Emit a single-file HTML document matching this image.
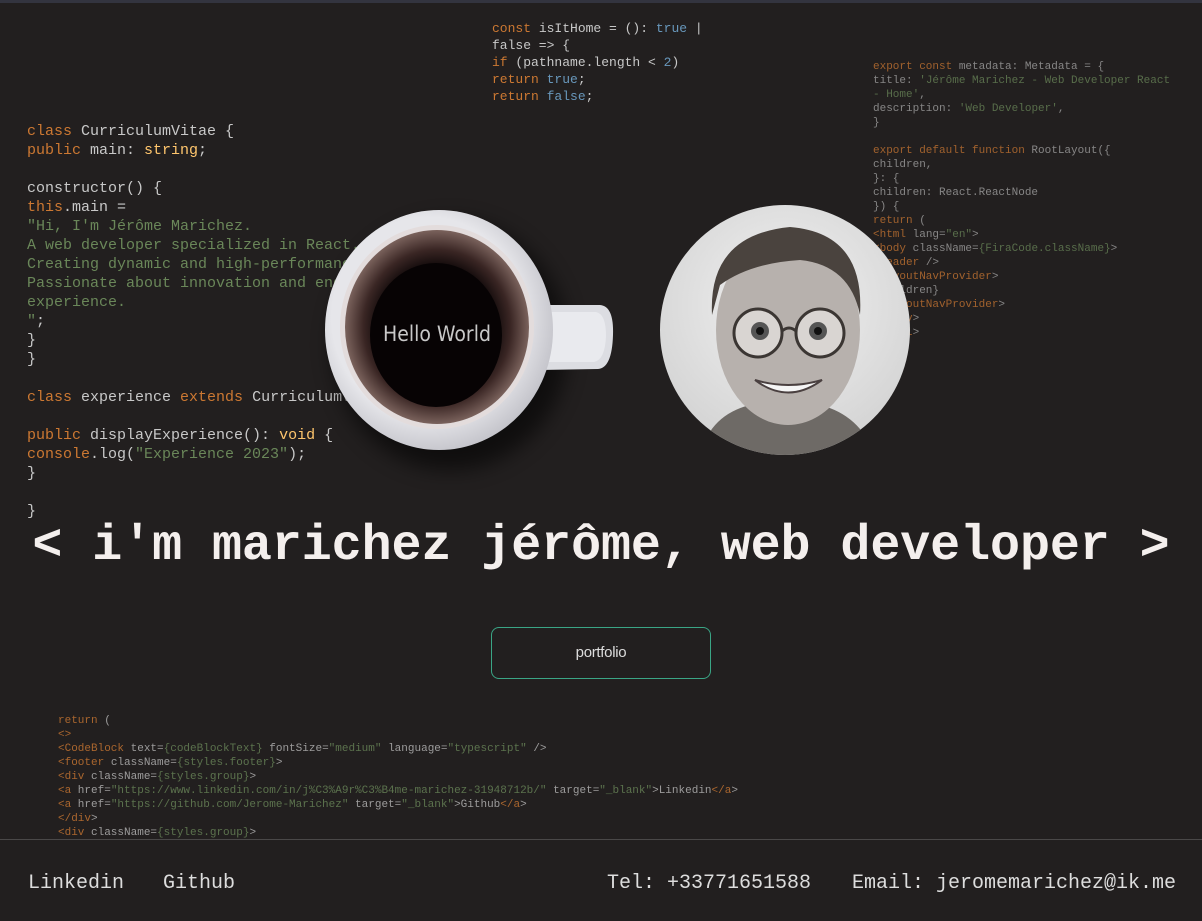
<!DOCTYPE html>
<html><head><meta charset="utf-8"><style>
*{margin:0;padding:0;box-sizing:border-box}
body{width:1202px;height:921px;background:#221f1f;overflow:hidden;position:relative;font-family:"Liberation Mono",monospace;color:#c9c9c9}
.topbar{position:absolute;left:0;top:0;width:1202px;height:3px;background:#33343f}
pre{font-family:"Liberation Mono",monospace;position:absolute;white-space:pre}
.k{color:#cc7832}.s{color:#6a8759}.y{color:#ffc66d}.n{color:#6897bb}
#c1{left:27px;top:122px;font-size:15px;line-height:19px;color:#c8c8c8}
#c2{left:492px;top:20px;font-size:13px;line-height:17px;color:#c8c8c8}
#c3{left:873px;top:60px;font-size:11px;line-height:14px;color:#a8a8a8;opacity:.75}
#c4{left:58px;top:714px;font-size:11px;line-height:14px;color:#bbb;opacity:.8;height:125px;overflow:hidden}
h1{position:absolute;left:0;width:1202px;top:518px;text-align:center;font-family:"Liberation Mono",monospace;font-weight:bold;font-size:50px;color:#f4efed;letter-spacing:-0.08px;white-space:nowrap}
.btn{position:absolute;left:491px;top:627px;width:220px;height:52px;border:1px solid #3aa585;border-radius:8px;color:#ddd;font-family:"Liberation Sans",sans-serif;font-size:15px;text-align:center;line-height:50px;letter-spacing:-.3px}
.foot{position:absolute;left:0;top:839px;width:1202px;height:82px;border-top:1px solid #4a4848;background:#221f1f;font-size:20px;color:#ddd}
.foot span{position:absolute;top:32px}
</style></head><body>
<div class="topbar"></div>
<pre id="c2"><span class="k">const</span> isItHome = (): <span class="n">true</span> |
false =&gt; {
<span class="k">if</span> (pathname.length &lt; <span class="n">2</span>)
<span class="k">return</span> <span class="n">true</span>;
<span class="k">return</span> <span class="n">false</span>;</pre>
<pre id="c3"><span class="k">export const</span> metadata: Metadata = {
title: <span class="s">'Jérôme Marichez - Web Developer React
- Home'</span>,
description: <span class="s">'Web Developer'</span>,
}

<span class="k">export default function</span> RootLayout({
children,
}: {
children: React.ReactNode
}) {
<span class="k">return</span> (
<span class="k">&lt;html</span> lang=<span class="s">"en"</span>&gt;
<span class="k">&lt;body</span> className=<span class="s">{FiraCode.className}</span>&gt;
<span class="k">&lt;Header</span> /&gt;
<span class="k">&lt;LayoutNavProvider</span>&gt;
{children}
<span class="k">&lt;/LayoutNavProvider</span>&gt;
<span class="k">&lt;/body</span>&gt;
<span class="k">&lt;/html</span>&gt;</pre>
<pre id="c1"><span class="k">class</span> CurriculumVitae {
<span class="k">public</span> main: <span class="y">string</span>;

constructor() {
<span class="k">this</span>.main =
<span class="s">"Hi, I'm Jérôme Marichez.
A web developer specialized in React.
Creating dynamic and high-performance
Passionate about innovation and end-user
experience.
"</span>;
}
}

<span class="k">class</span> experience <span class="k">extends</span> CurriculumVitae {

<span class="k">public</span> displayExperience(): <span class="y">void</span> {
<span class="k">console</span>.log(<span class="s">"Experience 2023"</span>);
}

}</pre>
<svg style="position:absolute;left:300px;top:190px" width="340" height="300" viewBox="300 190 340 300">
<defs>
<radialGradient id="cup" cx="0.45" cy="0.45" r="0.6"><stop offset="0.7" stop-color="#e6e6ea"/><stop offset="1" stop-color="#bdbdc4"/></radialGradient>
<radialGradient id="foam" cx="0.5" cy="0.5" r="0.5"><stop offset="0.6" stop-color="#0a0506"/><stop offset="0.8" stop-color="#3a2624"/><stop offset="1" stop-color="#7a625c"/></radialGradient>
<filter id="sh"><feGaussianBlur stdDeviation="10"/></filter>
</defs>
<ellipse cx="450" cy="345" rx="118" ry="125" fill="#000" opacity=".55" filter="url(#sh)"/>
<path d="M540 305 L600 305 Q614 306 613 335 Q612 368 598 369 L540 370 Z" fill="#dcdde2"/>
<path d="M545 312 L596 312 Q606 314 606 336 Q605 360 594 362 L545 362 Z" fill="#e9eaee"/>
<ellipse cx="439" cy="330" rx="114" ry="120" fill="url(#cup)"/>
<ellipse cx="437" cy="327" rx="97" ry="102" fill="#e3dcdc"/>
<ellipse cx="437" cy="327" rx="92" ry="97" fill="url(#foam)"/>
<ellipse cx="436" cy="335" rx="66" ry="72" fill="#070304"/>
<text x="437" y="341" text-anchor="middle" font-family="DejaVu Sans Condensed, Liberation Sans, sans-serif" font-size="21" fill="#c8c8c8">Hello World</text>
</svg>
<svg style="position:absolute;left:660px;top:205px" width="250" height="250" viewBox="0 0 250 250">
<defs><clipPath id="cc"><circle cx="125" cy="125" r="125"/></clipPath>
<radialGradient id="bg" cx="0.5" cy="0.4" r="0.7"><stop offset="0" stop-color="#f2f2f2"/><stop offset="1" stop-color="#cfcfcf"/></radialGradient></defs>
<g clip-path="url(#cc)">
<rect width="250" height="250" fill="url(#bg)"/>
<path d="M40 250 Q50 210 90 200 L160 200 Q200 210 215 250Z" fill="#6e6a66"/>
<ellipse cx="128" cy="125" rx="72" ry="95" fill="#b7b1ad"/>
<path d="M52 110 Q48 30 130 22 Q205 28 200 110 Q190 60 140 55 Q90 58 60 80Z" fill="#4a433e"/>
<circle cx="98" cy="128" r="24" fill="#d9d5d2" stroke="#3b3633" stroke-width="3"/>
<circle cx="160" cy="128" r="24" fill="#d9d5d2" stroke="#3b3633" stroke-width="3"/>
<circle cx="100" cy="126" r="9" fill="#555"/><circle cx="158" cy="126" r="9" fill="#555"/>
<circle cx="100" cy="126" r="4" fill="#111"/><circle cx="158" cy="126" r="4" fill="#111"/>
<path d="M122 126 Q129 120 136 126" stroke="#3b3633" stroke-width="3" fill="none"/>
<path d="M95 175 Q128 200 162 175 Q128 185 95 175Z" fill="#f5f5f5" stroke="#4a4040" stroke-width="2"/>
</g></svg>
<h1>&lt; i'm marichez jérôme, web developer &gt;</h1>
<div class="btn">portfolio</div>
<pre id="c4"><span class="k">return</span> (
<span class="k">&lt;&gt;</span>
<span class="k">&lt;CodeBlock</span> text=<span class="s">{codeBlockText}</span> fontSize=<span class="s">"medium"</span> language=<span class="s">"typescript"</span> /&gt;
<span class="k">&lt;footer</span> className=<span class="s">{styles.footer}</span>&gt;
<span class="k">&lt;div</span> className=<span class="s">{styles.group}</span>&gt;
<span class="k">&lt;a</span> href=<span class="s">"https://www.linkedin.com/in/j%C3%A9r%C3%B4me-marichez-31948712b/"</span> target=<span class="s">"_blank"</span>&gt;Linkedin<span class="k">&lt;/a</span>&gt;
<span class="k">&lt;a</span> href=<span class="s">"https://github.com/Jerome-Marichez"</span> target=<span class="s">"_blank"</span>&gt;Github<span class="k">&lt;/a</span>&gt;
<span class="k">&lt;/div</span>&gt;
<span class="k">&lt;div</span> className=<span class="s">{styles.group}</span>&gt;</pre>
<div class="foot">
<span style="left:28px">Linkedin</span>
<span style="left:163px">Github</span>
<span style="left:607px">Tel: +33771651588</span>
<span style="left:852px">Email: jeromemarichez@ik.me</span>
</div>
</body></html>
